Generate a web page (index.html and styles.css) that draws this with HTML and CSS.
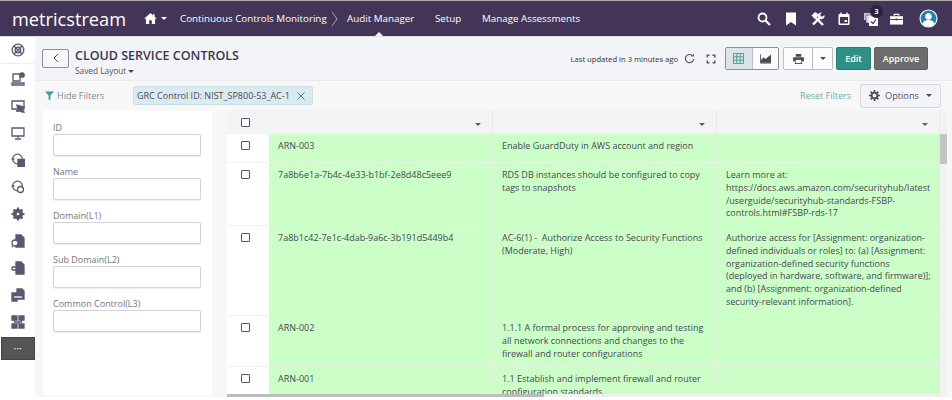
FILE: index.html
```html
<!DOCTYPE html>
<html lang="en">
<head>
<meta charset="utf-8">
<title>Cloud Service Controls</title>
<link rel="stylesheet" href="styles.css">
</head>
<body>
<header class="topbar">
  <div class="logo">metricstream</div>
  <div class="home">
    <svg class="home-icon" viewBox="0 0 14 12"><path d="M7 0 0 6.200h2V12h3.600V8h2.800v4H12V6.200h2L11.500 4V1H10v1.700z"/></svg>
    <span class="caret caret-white"></span>
  </div>
  <nav class="nav">
    <a class="nav-link nav-first">Continuous Controls Monitoring</a>
    <svg class="crumb" viewBox="0 0 7 16"><path d="M1 1l5 7-5 7"/></svg>
    <a class="nav-link nav-active">Audit Manager</a>
    <a class="nav-link nav-setup">Setup</a>
    <a class="nav-link nav-manage">Manage Assessments</a>
  </nav>
  <div class="top-icons">
    <svg class="ti ti-search" viewBox="0 0 14 14"><circle cx="5.500" cy="5.500" r="4" fill="none" stroke="#fff" stroke-width="1.800"/><path d="M8.500 8.500l4.500 4.500" stroke="#fff" stroke-width="2.200"/></svg>
    <svg class="ti ti-mark" viewBox="0 0 10 13"><path d="M0 0h10v13L5 9.600 0 13z" fill="#fff"/></svg>
    <svg class="ti ti-tools" viewBox="0 0 14 14"><path d="M3.500 4.500l8.500 8.500" stroke="#fff" stroke-width="2.400"/><path d="M.5 3.500L4 0l2.500 1.500L7 4 4 7z" fill="#fff"/><path d="M2 12.500l7-7" stroke="#fff" stroke-width="2.400"/><path d="M13.500 3.200A3.400 3.400 0 1 1 10.800.500L9.200 2.400l.4 1.800 1.800.4z" fill="#fff"/></svg>
    <svg class="ti ti-cal" viewBox="0 0 12 13"><path d="M1.500 2h9a1 1 0 0 1 1 1v9a1 1 0 0 1-1 1h-9a1 1 0 0 1-1-1V3a1 1 0 0 1 1-1z" fill="#fff"/><path d="M2 5h8v6.500H2z" fill="#433557"/><path d="M6.500 8h2.500v2H6.500z" fill="#fff"/><path d="M3 .5v2M9 .5v2" stroke="#fff" stroke-width="1.400"/></svg>
    <span class="task">
      <svg class="ti ti-task" viewBox="0 0 14 14"><path d="M0 1h7v7H0z" fill="#c9c5d4"/><path d="M2 3h8v8H2z" fill="#e5e3ea" stroke="#433557" stroke-width=".6"/><path d="M5 5h9v9H5z" fill="#fff"/><path d="M7 9.500l2 2 3-4" fill="none" stroke="#433557" stroke-width="1.200"/></svg>
      <span class="badge">3</span>
    </span>
    <svg class="ti ti-case" viewBox="0 0 14 12"><path d="M4.500 2.500V1h5v1.500" fill="none" stroke="#fff" stroke-width="1.200"/><path d="M0 3h14v9H0z" fill="#fff"/><path d="M0 6.500h14" stroke="#433557"/><path d="M6 5.500h2v2H6z" fill="#433557"/></svg>
    <svg class="ti ti-user" viewBox="0 0 20 20"><circle cx="10" cy="10" r="9.500" fill="#fff"/><circle cx="10" cy="10" r="8.300" fill="#1f7fb6"/><circle cx="10" cy="7.800" r="3.400" fill="#fff"/><path d="M3.600 15.500c1-3 3.600-4 6.400-4s5.400 1 6.400 4a8.500 8.500 0 0 1-12.800 0z" fill="#fff"/></svg>
  </div>
</header>

<div class="shell">
  <aside class="rail">
    <div class="rail-head">
      <svg class="ri" viewBox="0 0 14 14"><circle cx="7" cy="7" r="5.800"/><circle cx="7" cy="7" r="2.800"/><path d="M3 3l8 8M11 3l-8 8"/></svg>
    </div>
    <svg class="ri" viewBox="0 0 14 14"><path d="M2 2h7v7H2zM1 11h12v2H1z"/><circle cx="11" cy="3" r="2.200" class="fill"/></svg>
    <svg class="ri" viewBox="0 0 14 14"><path d="M1 2h12v8H1zM5 12h5"/><path d="M6 6l7 2-2 2 2 3-2 0-2-2-2 1z" class="fill"/></svg>
    <svg class="ri" viewBox="0 0 14 14"><path d="M1 2h12v8H1zM7 10v2M4 13h6"/></svg>
    <svg class="ri" viewBox="0 0 14 14"><circle cx="6.500" cy="6" r="4.800"/><path d="M.5 6h3"/><path d="M7 6.500h6.500v7H7z" class="fill"/></svg>
    <svg class="ri" viewBox="0 0 14 14"><circle cx="6.500" cy="6" r="4.800"/><path d="M.5 6h3"/><circle cx="9.500" cy="9.500" r="3" fill="#fff"/></svg>
    <svg class="ri" viewBox="0 0 14 14"><circle cx="7" cy="7" r="4.500" class="fill"/><path d="M7 .5v13M.5 7h13M2.500 2.500l9 9M11.500 2.500l-9 9" stroke-width="2"/><circle cx="7" cy="7" r="2" fill="#fff"/></svg>
    <svg class="ri" viewBox="0 0 14 14"><path d="M5 1h5l3 3v9H5z" class="fill"/><circle cx="4" cy="9" r="3" fill="#fff"/><path d="M1 13l1.500-2"/></svg>
    <svg class="ri" viewBox="0 0 14 14"><path d="M5 1h5l3 3v9H5z" class="fill"/><path d="M1 6h4M1 9h4M1 6v3"/></svg>
    <svg class="ri" viewBox="0 0 14 14"><path d="M6 1h5l2 2v8H6z" class="fill"/><path d="M1 5h5v8H1z" class="fill"/><path d="M3 9h8" stroke="#fff"/></svg>
    <svg class="ri" viewBox="0 0 14 14"><path d="M1 1h5v4H1zM8 1h5v4H8zM1 9h5v4H1zM8 9h5v4H8z" class="fill"/><path d="M3.500 5v2h7V5M7 7v2"/></svg>
    <button class="rail-more">&#8226;&#8226;&#8226;</button>
  </aside>

  <main class="content">
    <section class="head">
      <button class="back"><svg class="back-icon" viewBox="0 0 6 10"><path d="M5 1 1 5l4 4"/></svg></button>
      <div class="title-block">
        <h1 class="title">CLOUD SERVICE CONTROLS</h1>
        <div class="saved">Saved Layout<span class="caret caret-dark caret-saved"></span></div>
      </div>
      <div class="head-tools">
        <span class="updated">Last updated in 3 minutes ago</span>
        <svg class="tool-refresh" viewBox="0 0 12 12"><path d="M10.500 6.500A4.500 4.500 0 1 1 9 2.700"/><path d="M10.800.800v3h-3z" class="solid"/></svg>
        <svg class="tool-expand" viewBox="0 0 10 10"><path d="M.5.500h3v1.500H2v1.500H.5zM9.500.500v3H8V2H6.500V.500zM.5 9.500v-3H2V8h1.500v1.500zM9.500 9.500h-3V8H8V6.500h1.500z"/></svg>
        <div class="seg">
          <button class="seg-btn seg-on"><svg class="seg-icon" viewBox="0 0 11 11"><path d="M.5.500h10v10H.5zM.5 3.800h10M.5 7.200h10M3.800.500v10M7.200.500v10" fill="none" stroke="#4ba596"/></svg></button>
          <button class="seg-btn"><svg class="seg-icon" viewBox="0 0 12 11"><path d="M.5 1v9.500H12" fill="none" stroke="#4d4a55"/><path d="M1 10V7l3-3 2 2 5-4 1-1v9z" fill="#4d4a55"/></svg></button>
        </div>
        <div class="seg seg-print">
          <button class="seg-btn seg-wide"><svg class="seg-print-icon" viewBox="0 0 12 11"><path d="M3 0h6v3H3zM0 3.500h12V8h-2v3H2V8H0z" fill="#4d4a55"/><path d="M3 6.500h6V10H3z" fill="#fff"/></svg></button>
          <button class="seg-btn seg-drop"><span class="caret caret-dark"></span></button>
        </div>
        <button class="btn btn-edit">Edit</button>
        <button class="btn btn-approve">Approve</button>
      </div>
    </section>

    <section class="filterbar">
      <svg class="funnel" viewBox="0 0 10 10"><path d="M0 0h10L6 4.500V10L4 8.500v-4z"/></svg>
      <span class="hide">Hide Filters</span>
      <div class="chip">GRC Control ID: NIST_SP800-53_AC-1<svg class="chip-x" viewBox="0 0 9 9"><path d="M.5.500l8 8M8.500.500l-8 8"/></svg></div>
      <a class="reset">Reset Filters</a>
      <button class="options"><svg class="gear" viewBox="0 0 12 12"><circle cx="6" cy="6" r="3.200" fill="none" stroke="#4d4a55" stroke-width="2"/><path d="M6 0v12M0 6h12M1.800 1.800l8.400 8.400M10.200 1.800l-8.400 8.400" stroke="#4d4a55" stroke-width="1.800" stroke-dasharray="2.200 7.600"/></svg>Options<span class="caret caret-dark caret-options"></span></button>
    </section>

    <section class="body">
      <form class="panel">
        <label class="field"><span>ID</span><input class="input" type="text"></label>
        <label class="field"><span>Name</span><input class="input" type="text"></label>
        <label class="field"><span>Domain(L1)</span><input class="input" type="text"></label>
        <label class="field"><span>Sub Domain(L2)</span><input class="input" type="text"></label>
        <label class="field"><span>Common Control(L3)</span><input class="input" type="text"></label>
      </form>

      <div class="grid-wrap">
        <div class="grid-main">
          <div class="grid-clip">
            <table class="grid">
              <colgroup><col class="c0"><col class="c1"><col class="c2"><col class="c3"></colgroup>
              <thead>
                <tr>
                  <th class="check"><span class="box box-head"></span></th>
                  <th><span class="caret caret-sort"></span></th>
                  <th><span class="caret caret-sort"></span></th>
                  <th><span class="caret caret-sort"></span></th>
                </tr>
              </thead>
              <tbody>
                <tr class="r1">
                  <td class="check"><span class="box"></span></td>
                  <td>ARN-003</td>
                  <td>Enable GuardDuty in AWS account and region</td>
                  <td></td>
                </tr>
                <tr class="r2">
                  <td class="check"><span class="box"></span></td>
                  <td>7a8b6e1a-7b4c-4e33-b1bf-2e8d48c5eee9</td>
                  <td>RDS DB instances should be configured to copy<br>tags to snapshots</td>
                  <td>Learn more at:<br>https://docs.aws.amazon.com/securityhub/latest<br>/userguide/securityhub-standards-FSBP-<br>controls.html#FSBP-rds-17</td>
                </tr>
                <tr class="r3">
                  <td class="check"><span class="box"></span></td>
                  <td>7a8b1c42-7e1c-4dab-9a6c-3b191d5449b4</td>
                  <td>AC-6(1) - &nbsp;Authorize Access to Security Functions<br>(Moderate, High)</td>
                  <td>Authorize access for [Assignment: organization-<br>defined individuals or roles] to: (a) [Assignment:<br>organization-defined security functions<br>(deployed in hardware, software, and firmware)];<br>and (b) [Assignment: organization-defined<br>security-relevant information].</td>
                </tr>
                <tr class="r4">
                  <td class="check"><span class="box"></span></td>
                  <td>ARN-002</td>
                  <td>1.1.1 A formal process for approving and testing<br>all network connections and changes to the<br>firewall and router configurations</td>
                  <td></td>
                </tr>
                <tr class="r5">
                  <td class="check"><span class="box"></span></td>
                  <td>ARN-001</td>
                  <td>1.1 Establish and implement firewall and router<br>configuration standards</td>
                  <td></td>
                </tr>
              </tbody>
            </table>
          </div>
          <div class="hscroll"><div class="hthumb"></div></div>
        </div>
        <div class="vscroll"><div class="vthumb"></div></div>
      </div>
    </section>
  </main>
</div>
</body>
</html>
```

FILE: styles.css
```css
* { box-sizing: border-box; }
html, body { margin: 0; padding: 0; }
body {
  width: 952px;
  height: 400px;
  overflow: hidden;
  background: #fff;
  font-family: "Open Sans", "Liberation Sans", sans-serif;
  font-size: 9px;
  color: #4a4a52;
}
button { font-family: inherit; padding: 0; cursor: pointer; }

.caret { display: inline-block; width: 0; height: 0; border-style: solid; border-color: transparent; border-width: 3px 3px 0; }
.caret-white { border-top-color: #fff; }
.caret-dark { border-top-color: #4d4a55; }

/* top bar */
.topbar {
  height: 37px;
  border-top: 1px solid #b0b0b0;
  border-bottom: 1px solid #dcdbe0;
  background: #433557;
  color: #fff;
  display: flex;
  align-items: center;
}
.logo { margin-left: 12px; width: 132px; font-size: 18.200px; line-height: 24px; padding-top: 1px; }
.home { display: flex; align-items: center; gap: 4px; width: 36px; }
.home-icon { width: 13px; height: 11px; fill: #fff; }
.nav { display: flex; align-items: center; height: 100%; font-size: 9.800px; }
.nav-link { display: flex; align-items: center; height: 100%; position: relative; white-space: nowrap; }
.nav-first { width: 151px; }
.crumb { width: 7px; height: 16px; fill: none; stroke: #a9a3b6; margin-right: 9px; }
.nav-active { width: 88px; }
.nav-active::after {
  content: "";
  position: absolute;
  left: 28px;
  bottom: 0;
  border: 4px solid transparent;
  border-top: 0;
  border-bottom-color: #fff;
}
.nav-setup { width: 47px; }
.top-icons { position: relative; margin-left: auto; display: flex; align-items: center; height: 100%; padding-right: 14px; }
.ti { display: block; }
.ti-search { width: 14px; height: 14px; margin-right: 15px; }
.ti-mark { width: 10px; height: 14px; margin-right: 15px; }
.ti-tools { width: 14px; height: 14px; margin-right: 13px; }
.ti-cal { width: 12px; height: 13px; margin-right: 14px; }
.task { position: relative; display: block; margin-right: 12px; }
.ti-task { width: 14px; height: 14px; }
.badge {
  position: absolute;
  left: 6px;
  top: -7px;
  width: 13px;
  height: 13px;
  border-radius: 50%;
  background: #2a2438;
  color: #fff;
  font-size: 7px;
  font-weight: 700;
  line-height: 13px;
  text-align: center;
}
.ti-case { width: 13px; height: 12px; margin-right: 16px; }
.ti-user { width: 19px; height: 19px; }

/* shell */
.shell { display: flex; height: 363px; }
.rail { width: 35px; flex: none; background: #fff; display: flex; flex-direction: column; align-items: center; gap: 13px; }
.rail-head { width: 100%; height: 27px; border-bottom: 1px solid #eeeef1; display: flex; justify-content: center; padding-top: 6px; margin-bottom: -5px; flex: none; }
.ri { display: block; width: 14px; height: 14px; flex: none; fill: none; stroke: #5f5570; stroke-width: 1.300; }
.ri .fill { fill: #5f5570; }
.rail-more {
  width: 34px;
  height: 23px;
  margin: -5px 0 0 1px;
  background: #555;
  border: 1px solid #444;
  color: #fff;
  font-size: 6px;
  letter-spacing: .5px;
  flex: none;
}

.content { flex: 1; min-width: 0; background: #f7f7f7; display: flex; flex-direction: column; }

/* title strip */
.head {
  height: 44px;
  flex: none;
  background: #f3f4f8;
  border-bottom: 1px solid #e9e9ec;
  display: flex;
  align-items: center;
  padding: 0 24px 0 7px;
}
.back {
  width: 27px;
  height: 19px;
  margin-top: -1px;
  background: #f7f7f8;
  border: 1px solid #8e8e94;
  border-radius: 2px;
  display: flex;
  align-items: center;
  justify-content: center;
}
.back-icon { width: 6px; height: 10px; fill: none; stroke: #4d4a55; }
.title-block { margin: 8px 0 0 6px; }
.title { margin: 0; font-size: 12.500px; font-weight: 600; line-height: 16px; color: #3c3650; }
.saved { font-size: 8.300px; line-height: 12px; margin-top: 1px; color: #55525e; display: flex; align-items: center; }
.caret-saved { margin-left: 2px; border-width: 3.500px 3.500px 0; }
.head-tools { margin-left: auto; display: flex; align-items: center; }
.updated { font-size: 7.650px; color: #333; margin-right: 6px; white-space: nowrap; }
.tool-refresh { width: 11px; height: 11px; fill: none; stroke: #4d4a55; stroke-width: 1.200; margin-right: 11px; }
.tool-refresh .solid { fill: #4d4a55; stroke: none; }
.tool-expand { width: 10px; height: 10px; fill: #5a5a64; margin-right: 9px; }
.seg { display: flex; border: 1px solid #8e8e94; border-radius: 2px; height: 23px; width: 54px; flex: none; background: #fcfcfd; }
.seg-print { width: 50px; margin-left: 4px; border-color: #bdbdc2; }
.seg-btn { flex: 1; border: 0; background: transparent; display: flex; align-items: center; justify-content: center; }
.seg-btn + .seg-btn { border-left: 1px solid #bdbdc2; }
.seg-on { background: #dde3ea; }
.seg-icon { width: 11px; height: 11px; }
.seg-wide { flex: 1.500; }
.seg-print-icon { width: 11px; height: 10px; }
.btn { height: 23px; border-radius: 2px; font-size: 9px; font-weight: 600; color: #fff; flex: none; }
.btn-edit { width: 35px; margin-left: 3px; background: #2f8f85; border: 1px solid #268076; }
.btn-approve { width: 54px; margin-left: 3px; background: #6c6c6c; border: 1px solid #5e5e5e; }

/* filter bar */
.filterbar { height: 29px; flex: none; display: flex; align-items: center; padding: 0 11px 0 10px; }
.funnel { width: 9px; height: 10px; fill: #3f9d91; }
.hide { margin-left: 3px; width: 76px; font-size: 9px; color: #8a8a90; }
.chip {
  width: 180px;
  height: 19px;
  background: #dbeaf0;
  border: 1px solid #c9dfe6;
  border-radius: 2px;
  display: flex;
  align-items: center;
  padding-left: 3px;
  font-size: 9px;
  color: #4a4a52;
  white-space: nowrap;
}
.chip-x { width: 8px; height: 8px; margin-left: 7px; fill: none; stroke: #3f7f78; stroke-width: 1.100; }
.reset { margin-left: auto; color: #6fb0a6; font-size: 9px; margin-right: 9px; }
.options {
  width: 81px;
  height: 24px;
  background: #f3f4f8;
  border: 1px solid #d7d7db;
  border-radius: 2px;
  color: #55525e;
  font-size: 9.200px;
  display: flex;
  align-items: center;
  padding-left: 8px;
}
.gear { width: 11px; height: 11px; margin-right: 5px; }
.caret-options { margin-left: 7px; border-width: 3.500px 3.500px 0; }

/* body */
.body { flex: 1; min-height: 0; display: flex; align-items: flex-start; padding-left: 8px; background: linear-gradient(#f7f7f7 287px, #fff 287px); }
.panel { width: 169px; height: 285px; flex: none; background: #fff; padding: 12px 11px 0 10px; display: flex; flex-direction: column; }
.field { display: block; height: 44px; }
.field span { display: block; height: 12px; line-height: 12px; font-size: 9px; color: #77747e; }
.input { display: block; width: 148px; height: 22px; border: 1px solid #d4d4d7; border-radius: 2px; background: #fff; box-shadow: 0 1px 0 #eee; }

.grid-wrap { margin-left: 15px; width: 720px; height: 287px; display: flex; flex: none; }
.grid-main { width: 713px; flex: none; }
.grid-clip { height: 284px; overflow: hidden; }
.grid { width: 713px; border-collapse: separate; border-spacing: 0; table-layout: fixed; }
.c0 { width: 42px; }
.c1, .c2 { width: 224px; }
.c3 { width: 223px; }
.grid th { height: 24px; background: #f4f4f7; border-right: 1px solid #e9e9ec; position: relative; padding: 0; }
.grid td { background: #ccffc8; border-right: 1px solid #dcefd9; border-bottom: 1px solid #e6f4e3; vertical-align: top; padding: 6px 0 0 9px; font-size: 9px; line-height: 12.800px; color: #474750; white-space: nowrap; }
.grid .check { background: #fff; padding: 0; text-align: left; border-right: 0; border-bottom: 1px solid #eeeeee; }
.grid th.check { background: #f4f4f7; }
.r1 td { height: 29px; }
.r2 td { height: 63px; }
.r3 td { height: 90px; }
.r4 td { height: 51px; }
.box { display: block; width: 9px; height: 9px; margin: 7px 0 0 14px; border: 1px solid #56507a; border-radius: 1px; background: #fff; }
.box-head { margin: 1px 0 0 14px; }
.caret-sort { position: absolute; right: 11px; top: 13px; border-top-color: #5b5b63; border-width: 3px 3px 0; }
.hscroll { height: 3px; background: #f0f0f0; }
.hthumb { width: 317px; height: 3px; background: #bdbdbd; }
.vscroll { width: 7px; height: 287px; background: #f2f2f2; }
.vthumb { width: 7px; height: 30px; margin-top: 24px; background: #c4c4c4; }
```
